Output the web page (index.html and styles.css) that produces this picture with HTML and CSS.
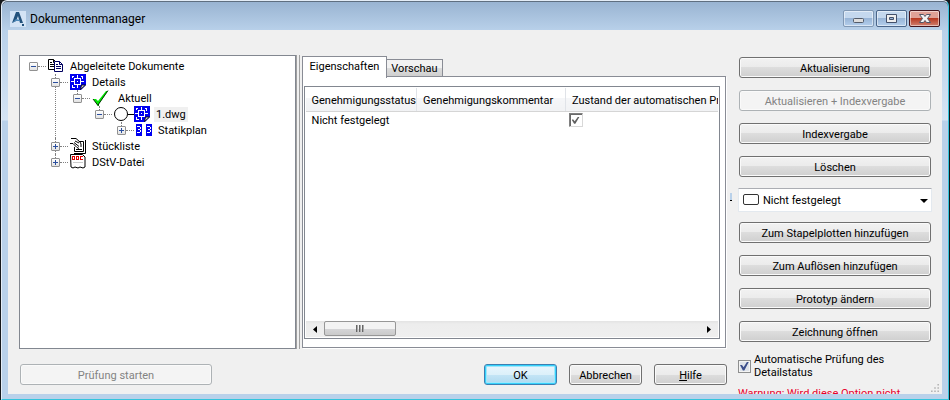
FILE: index.html
```html
<!DOCTYPE html>
<html lang="de">
<head>
  <meta charset="UTF-8">
  <meta name="viewport" content="width=device-width, initial-scale=1.0">
  <title>Dokumentenmanager</title>
  <link rel="stylesheet" href="styles.css">
</head>
<body>
  <!-- Shared icons -->
  <svg class="icon-defs" aria-hidden="true">
    <symbol id="icon-dwg" viewBox="0 0 16 16">
      <path fill="#0000f0" d="M0 0h16v11l-5 5H0z"/>
      <path fill="none" stroke="#fff" shape-rendering="crispEdges" d="M4.500 4.500h6v6h-6zM7.500 1v3M7.500 11v3M1 7.500h3M11 7.500h3M2 2.500h2M11 2.500h2M12.500 3v2M2.500 3v1M2.500 11v2h2"/>
      <path fill="#fff" d="M7 7h1v1H7z"/>
      <path fill="#c8c8c8" stroke="#000" stroke-width=".8" d="M10.500 15.500l1-4.500h4z"/>
    </symbol>
  </svg>

  <div class="window">
    <header class="titlebar">
      <svg class="app-icon" viewBox="0 0 16 16">
        <path fill="#d3e3f5" d="M0 0h16v16H0z"/>
        <path fill="#23527c" d="M6 1h3l4 11h-3L8 5l-2 5-4 2z"/>
        <path fill="#4d88b8" d="M2 12l4-4 4 1v1H6z"/>
        <path fill="#23527c" d="M12 13h2v2h-2z"/>
      </svg>
      <h1>Dokumentenmanager</h1>
      <div class="window-controls">
        <button type="button" class="control minimize" aria-label="Minimieren">
          <svg viewBox="0 0 29 15"><rect x="9.500" y="7.500" width="10" height="4" rx="1" fill="#ddd" stroke="#535b69"/></svg>
        </button>
        <button type="button" class="control" aria-label="Maximieren">
          <svg viewBox="0 0 29 15"><path fill="#eee" stroke="#43506a" fill-rule="evenodd" d="M9.500 3.500h10v8h-10zM12.500 6.500h4v2h-4z"/></svg>
        </button>
        <button type="button" class="control close" aria-label="Schließen">
          <svg viewBox="0 0 29 15"><path fill="#f4f4f4" stroke="#535666" d="M9.500 3.500h4l1.500 2 1.500-2h4l-3 4 3 4h-4l-1.500-2-1.500 2h-4l3-4z"/></svg>
        </button>
      </div>
    </header>

    <main>
      <section class="workspace">
        <div class="panes">
          <ul class="tree">
            <li>
              <div class="node">
                <button type="button" class="expander" aria-label="Zuklappen"></button>
                <svg class="icon" viewBox="0 0 16 16">
                  <path fill="#fff" stroke="#000" d="M.5 1.500h5l3 3v7h-8zM5.500 1.500v3h3"/>
                  <path stroke="#000" d="M2 4.500h2M2 6.500h4M2 8.500h4"/>
                  <path fill="#fff" stroke="#000060" d="M6.500 3.500h5l3 3v7h-8zM11.500 3.500v3h3"/>
                  <path stroke="#000060" d="M8 6.500h2M8 8.500h5M8 10.500h5"/>
                </svg>
                <span>Abgeleitete Dokumente</span>
              </div>
              <ul>
                <li>
                  <div class="node">
                    <button type="button" class="expander" aria-label="Zuklappen"></button>
                    <svg class="icon"><use href="#icon-dwg"/></svg>
                    <span>Details</span>
                  </div>
                  <ul>
                    <li>
                      <div class="node">
                        <button type="button" class="expander" aria-label="Zuklappen"></button>
                        <svg class="icon wide" viewBox="0 0 20 16">
                          <path fill="#00e800" d="M1 9h3l2 2L14 1h2L7 14v2H6z"/>
                          <path fill="none" stroke="#000" stroke-width=".8" d="M1 9l5 6.500 1-2L16 .5"/>
                        </svg>
                        <span>Aktuell</span>
                      </div>
                      <ul>
                        <li>
                          <div class="node">
                            <button type="button" class="expander" aria-label="Zuklappen"></button>
                            <svg class="icon circle" viewBox="0 0 20 16">
                              <circle cx="7" cy="8" r="6.500" fill="#fff" stroke="#000"/>
                              <path stroke="#000" d="M14 8.500h6"/>
                            </svg>
                            <svg class="icon"><use href="#icon-dwg"/></svg>
                            <span class="selected">1.dwg</span>
                          </div>
                          <ul>
                            <li>
                              <div class="node">
                                <button type="button" class="expander plus" aria-label="Aufklappen"></button>
                                <svg class="icon" viewBox="0 0 16 16">
                                  <path fill="#0000f0" d="M0 2h6v12H0zM10 2h6v12h-6z"/>
                                  <path fill="none" stroke="#fff" shape-rendering="crispEdges" d="M1 4.500h3M4.500 5v2M2 7.500h2M4.500 8v2M1 10.500h3M11 4.500h3M14.500 5v2M12 7.500h2M14.500 8v2M11 10.500h3"/>
                                </svg>
                                <span>Statikplan</span>
                              </div>
                            </li>
                          </ul>
                        </li>
                      </ul>
                    </li>
                  </ul>
                </li>
                <li>
                  <div class="node">
                    <button type="button" class="expander plus" aria-label="Aufklappen"></button>
                    <svg class="icon" viewBox="0 0 16 16">
                      <path fill="#fff" stroke="#000" d="M4.500 3.500h9v10h-9z"/>
                      <path fill="none" stroke="#000" d="M15.500 2v13.500H4M6 11.500h6"/>
                      <path fill="#fff" d="M0 1h6l5 4v4l-4 1-5-2-2-2z"/>
                      <path fill="none" stroke="#000" d="M1 .5h5l4 3.500 1 2v3M0 5.500h3l4 4M4 4.500l5 4M5 3l4 2M7 9.500l2 1"/>
                    </svg>
                    <span>Stückliste</span>
                  </div>
                </li>
                <li>
                  <div class="node">
                    <button type="button" class="expander plus" aria-label="Aufklappen"></button>
                    <svg class="icon" viewBox="0 0 16 16">
                      <path fill="#fff" stroke="#000" d="M.5.5h12l2.500 2.500v10l-2 1-3-1-2 1-3-1-2 1-2-1z"/>
                      <path fill="none" stroke="#e00000" shape-rendering="crispEdges" d="M2.500 2v3.500h2v-3h-2M6.500 2.500h2v3h-2zM13 2.500h-2.500v3H13"/>
                      <path stroke="#ccc" d="M3 8.500h10"/>
                    </svg>
                    <span>DStV-Datei</span>
                  </div>
                </li>
              </ul>
            </li>
          </ul>

          <div class="splitter"></div>

          <div class="details">
            <div class="tabs" role="tablist">
              <button type="button" class="tab active" role="tab" aria-selected="true">Eigenschaften</button>
              <button type="button" class="tab" role="tab" aria-selected="false">Vorschau</button>
            </div>
            <div class="tab-page">
              <div class="list">
                <div class="table-wrap">
                  <table>
                    <thead>
                      <tr>
                        <th class="col-status">Genehmigungsstatus</th>
                        <th class="col-comment">Genehmigungskommentar</th>
                        <th>Zustand der automatischen Prüfung</th>
                      </tr>
                    </thead>
                    <tbody>
                      <tr>
                        <td>Nicht festgelegt</td>
                        <td></td>
                        <td class="check-cell"><input type="checkbox" class="sunken" aria-label="Zustand der automatischen Prüfung" checked></td>
                      </tr>
                    </tbody>
                  </table>
                </div>
                <div class="scrollbar">
                  <button type="button" class="scroll-arrow" aria-label="Nach links">
                    <svg viewBox="0 0 4 7"><path d="M4 0v7L0 3.500z"/></svg>
                  </button>
                  <div class="thumb"><i></i><i></i><i></i></div>
                  <button type="button" class="scroll-arrow last" aria-label="Nach rechts">
                    <svg viewBox="0 0 4 7"><path d="M0 0v7l4-3.500z"/></svg>
                  </button>
                </div>
              </div>
            </div>
          </div>
        </div>

        <footer>
          <button type="button" class="btn btn-check" disabled>Prüfung starten</button>
          <button type="button" class="btn btn-default">OK</button>
          <button type="button" class="btn">Abbrechen</button>
          <button type="button" class="btn"><u>H</u>ilfe</button>
        </footer>
      </section>

      <aside class="actions">
        <button type="button" class="btn">Aktualisierung</button>
        <button type="button" class="btn" disabled>Aktualisieren + Indexvergabe</button>
        <button type="button" class="btn">Indexvergabe</button>
        <button type="button" class="btn">Löschen</button>
        <div class="combo">
          <span class="combo-mark"></span>
          <span class="swatch"></span>
          <select aria-label="Status">
            <option>Nicht festgelegt</option>
          </select>
          <svg class="combo-arrow" viewBox="0 0 8 4"><path d="M0 0h8L4 4z"/></svg>
        </div>
        <button type="button" class="btn">Zum Stapelplotten hinzufügen</button>
        <button type="button" class="btn">Zum Auflösen hinzufügen</button>
        <button type="button" class="btn">Prototyp ändern</button>
        <button type="button" class="btn">Zeichnung öffnen</button>
        <label class="auto-check">
          <input type="checkbox" checked>
          <span>Automatische Prüfung des Detailstatus</span>
        </label>
        <p class="warning">Warnung: Wird diese Option nicht</p>
      </aside>

      <svg class="grip" viewBox="0 0 10 10">
        <path fill="#b5b5b5" d="M8 0h2v2H8zM4 4h2v2H4zM8 4h2v2H8zM0 8h2v2H0zM4 8h2v2H4zM8 8h2v2H8z"/>
      </svg>
    </main>
  </div>
</body>
</html>
```

FILE: styles.css
```css
/* Global Styles */
* {
  margin: 0;
  padding: 0;
  box-sizing: border-box;
}

body {
  padding: 0 1px;
  background-color: #15181c;
  color: #000;
  font-family: Tahoma, Roboto, 'Liberation Sans', sans-serif;
  font-size: 11px;
  line-height: 13px;
}

button, select, input {
  font: inherit;
  color: inherit;
}

ul {
  list-style: none;
}

.icon-defs {
  display: none;
}

/* Window Frame */
.window {
  display: flex;
  flex-direction: column;
  height: 100vh;
  padding: 0 6px 5px;
  border: 1px solid #35c4dc;
  border-top-color: #e4edf7;
  border-left-color: #e4edf7;
  border-radius: 6px 6px 0 0;
  background: linear-gradient(#98b3d1, #b9d1ea 30px, #d5e4f4 119px, #b9d1ea 120px);
  box-shadow: inset 0 1px #5f6f80;
}

.titlebar {
  display: flex;
  align-items: center;
  height: 29px;
  padding: 6px 2px 0 2px;
  flex: none;
}

.app-icon {
  width: 16px;
  height: 16px;
}

.titlebar h1 {
  flex: 1;
  margin-left: 4px;
  font-family: 'Segoe UI', Roboto, sans-serif;
  font-size: 12px;
  font-weight: normal;
  line-height: 16px;
}

.window-controls {
  display: flex;
  gap: 2px;
}

.control {
  width: 31px;
  height: 17px;
  border: 1px solid #4a6589;
  border-radius: 2px;
  background: linear-gradient(#c4d8ee 50%, #98b5d7 50%, #b4cfec);
  box-shadow: inset 0 0 0 1px rgba(255, 255, 255, 0.5);
}

.control svg {
  display: block;
  width: 29px;
  height: 15px;
}

.control.minimize {
  border-color: #8098b4;
}

.control.close {
  border-color: #43141c;
  background: linear-gradient(#e0a196 50%, #b83a22 50%, #d08070);
}

/* Main Layout */
main {
  position: relative;
  display: flex;
  flex: 1;
  gap: 11px;
  min-height: 0;
  padding: 25px 10px 0 11px;
  background-color: #f0f0f0;
  overflow: hidden;
}

.workspace {
  display: flex;
  flex-direction: column;
  flex: 1;
  min-width: 0;
}

.panes {
  display: grid;
  grid-template-columns: minmax(0, 13fr) 6px minmax(0, 20fr);
  flex: 1;
  min-height: 0;
}

/* Tree */
.tree {
  padding: 2px 9px;
  border: 1px solid #828790;
  background-color: #fff;
}

.tree ul {
  margin-left: 22px;
}

.tree li {
  position: relative;
}

.tree li li::before {
  content: '';
  position: absolute;
  top: 0;
  left: 4px;
  height: 100%;
  border-left: 1px dotted #808080;
}

.tree li li:last-child::before {
  height: 8px;
}

.node {
  display: flex;
  align-items: center;
  height: 16px;
  white-space: nowrap;
}

.node::before {
  content: '';
  order: 1;
  width: 8px;
  border-top: 1px dotted #808080;
}

.expander {
  position: relative;
  width: 9px;
  height: 9px;
  border: 1px solid #919191;
  border-radius: 1px;
  background: linear-gradient(#fff, #e2e2e2);
}

.expander::before,
.expander.plus::after {
  content: '';
  position: absolute;
  top: 3px;
  left: 1px;
  width: 5px;
  height: 1px;
  background-color: #2b4f9e;
}

.expander.plus::after {
  top: 1px;
  left: 3px;
  width: 1px;
  height: 5px;
}

.icon {
  order: 2;
  width: 16px;
  height: 16px;
  margin-left: 2px;
}

.icon.wide {
  width: 20px;
}

.icon.circle {
  width: 20px;
}

.icon.circle + .icon {
  margin-left: 0;
}

.node span {
  order: 3;
  margin-left: 4px;
  padding: 1px 2px;
}

.node .selected {
  background-color: #f0f0f0;
}

.splitter {
  width: 4px;
  border-right: 1px solid #a0a0a0;
  border-left: 1px solid #a0a0a0;
}

/* Tabs */
.details {
  display: flex;
  flex-direction: column;
}

.tabs {
  display: flex;
  align-items: flex-end;
  height: 22px;
  padding-top: 1px;
}

.tab {
  height: 18px;
  padding: 0 4px;
  border: 1px solid #898c95;
  border-left: none;
  background: linear-gradient(#f2f2f2 50%, #dddddd 50%, #cfcfcf);
}

.tab.active {
  position: relative;
  z-index: 1;
  height: 22px;
  margin-bottom: -1px;
  padding: 0 7px 3px;
  border-left: 1px solid #898c95;
  border-bottom: none;
  background: #fff;
}

.tab-page {
  display: flex;
  flex: 1;
  margin: -1px 1px 1px 0;
  padding: 9px 5px 8px 1px;
  min-height: 0;
  border: 1px solid #898c95;
  background-color: #fff;
  box-shadow: 1px 1px #fff;
}

.list {
  display: flex;
  flex-direction: column;
  flex: 1;
  min-width: 0;
  padding: 1px;
  border: 1px solid #828790;
}

/* Table */
.table-wrap {
  flex: 1;
  overflow: hidden;
}

table {
  width: 520px;
  table-layout: fixed;
  border-collapse: collapse;
}

th {
  height: 23px;
  padding: 2px 6px 0;
  border-right: 1px solid #e0e3e8;
  border-bottom: 1px solid #d5d5d5;
  background: linear-gradient(#fff 45%, #f5f6f8 45%, #f1f2f4);
  font-weight: normal;
  text-align: left;
  white-space: nowrap;
}

.col-status {
  width: 111px;
}

.col-comment {
  width: 149px;
}

td {
  height: 18px;
  padding: 1px 6px 0;
}

.check-cell {
  padding: 0 3px;
}

input[type="checkbox"] {
  display: grid;
  place-items: center;
  width: 13px;
  height: 13px;
  flex: none;
  appearance: none;
  border: 1px solid #8e8f8f;
  background: #dfe4ea;
  box-shadow: inset 0 0 0 1px #f4f4f4;
}

input[type="checkbox"]::before {
  content: '';
  width: 9px;
  height: 9px;
  background-color: #3c4f8c;
  clip-path: polygon(0 40%, 22% 40%, 40% 65%, 80% 0, 100% 0, 48% 100%, 32% 100%);
}

input[type="checkbox"].sunken {
  width: 14px;
  height: 14px;
  border: 1px solid #d8d8d8;
  border-top-color: #808080;
  border-left-color: #808080;
  background: #fff;
  box-shadow: inset 1px 1px #696969;
}

input[type="checkbox"].sunken::before {
  width: 8px;
  height: 7px;
  background-color: #606060;
}

/* Scrollbar */
.scrollbar {
  display: flex;
  height: 16px;
  background: linear-gradient(#e3e3e3, #ededed 3px, #efefef);
}

.scroll-arrow {
  width: 18px;
  border: none;
  background: none;
}

.scroll-arrow.last {
  margin-left: auto;
}

.scroll-arrow svg {
  width: 4px;
  height: 7px;
}

.thumb {
  display: flex;
  align-items: center;
  justify-content: center;
  gap: 1px;
  width: 72px;
  height: 15px;
  border: 1px solid #979797;
  border-radius: 2px;
  background: linear-gradient(#f3f3f3 50%, #d6d6d8 50%, #cacaca);
}

.thumb i {
  width: 2px;
  height: 7px;
  border-left: 1px solid #666;
  border-right: 1px solid #aaa;
}

/* Buttons */
.btn {
  height: 21px;
  padding-top: 1px;
  border: 1px solid #707070;
  border-radius: 3px;
  background: linear-gradient(#f2f2f2, #ebebeb 50%, #dddddd 50%, #cfcfcf);
  box-shadow: inset 0 0 0 1px #fafafa;
}

.btn:disabled {
  border-color: #adb2b5;
  background: #f4f4f4;
  color: #838383;
}

.btn-default {
  border-color: #3c7fb1;
  background: linear-gradient(#e9f6fd, #dcf0fa 50%, #c4e5f6 50%, #aed9ef);
  box-shadow: inset 0 0 0 1px #35d1fb, inset 0 0 0 2px #a0e6fb;
}

footer {
  display: flex;
  gap: 12px;
  padding: 15px 0 9px 1px;
}

footer .btn {
  width: 73px;
}

footer .btn-check {
  width: 192px;
  margin-right: auto;
}

/* Actions */
.actions {
  display: flex;
  flex-direction: column;
  flex: none;
  gap: 12px;
  width: 194px;
  padding-top: 2px;
}

.actions .btn {
  flex: none;
  margin: 0 1px;
}

.combo {
  position: relative;
  flex: none;
  margin: -1px 0 -2px;
}

.combo select {
  width: 100%;
  height: 24px;
  padding: 0 20px 0 24px;
  appearance: none;
  border: 1px solid #e3e9ef;
  border-top-color: #abadb3;
  border-radius: 1px;
  background-color: #fff;
}

.combo-mark,
.swatch,
.combo-arrow {
  position: absolute;
  pointer-events: none;
}

.combo-mark {
  top: 5px;
  left: -8px;
  width: 2px;
  height: 8px;
  border-bottom: 1px solid #000;
  background-color: #b9d1ea;
}

.swatch {
  top: 6px;
  left: 5px;
  width: 16px;
  height: 11px;
  border: 1px solid #333;
  border-radius: 2px;
  background-color: #fff;
}

.combo-arrow {
  top: 11px;
  right: 4px;
  width: 8px;
  height: 4px;
}

.auto-check {
  display: flex;
  align-items: center;
  gap: 3px;
  margin-top: -1px;
}

.warning {
  flex: none;
  margin-top: -4px;
  color: #e8002c;
  white-space: nowrap;
}

.grip {
  position: absolute;
  right: 3px;
  bottom: 2px;
  width: 8px;
  height: 8px;
}
```
